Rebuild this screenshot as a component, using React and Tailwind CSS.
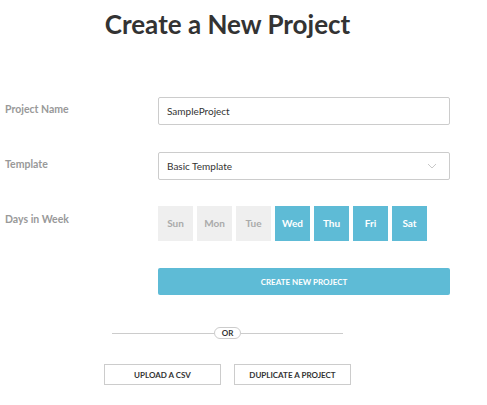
import React from "react";

const days = [
  { d: "Sun", on: false },
  { d: "Mon", on: false },
  { d: "Tue", on: false },
  { d: "Wed", on: true },
  { d: "Thu", on: true },
  { d: "Fri", on: true },
  { d: "Sat", on: true },
];

export default function App() {
  return (
    <div className="w-[487px] h-[405px] bg-white font-['Lato',sans-serif]">
      <div className="w-[450px] pl-[5px]">
        <h1 className="pt-[8px] h-[50px] text-center text-[26px] font-bold text-[#333333] leading-[32px]">
          Create a New Project
        </h1>
        <div className="mt-[47px] flex items-center h-[28px]">
          <div className="w-[153px] text-[10.5px] font-bold text-[#999999] -mt-[2px]">Project Name</div>
          <div className="flex-1 h-[28px] border border-[#cccccc] rounded-[2px] flex items-center px-[8px] text-[10px] text-[#333333]">
            SampleProject
          </div>
        </div>
        <div className="mt-[27px] flex items-center h-[28px]">
          <div className="w-[153px] text-[10.5px] font-bold text-[#999999] -mt-[2px]">Template</div>
          <div className="flex-1 h-[28px] border border-[#cccccc] rounded-[2px] flex items-center justify-between pl-[8px] pr-[12px] text-[10px] text-[#333333]">
            <span>Basic Template</span>
            <svg width="10" height="6" viewBox="0 0 10 6" fill="none">
              <path d="M1 1l4 4 4-4" stroke="#c8c8c8" strokeWidth="1" />
            </svg>
          </div>
        </div>
        <div className="mt-[26px] flex items-start">
          <div className="w-[153px] text-[10.5px] font-bold text-[#999999] pt-[6px]">Days in Week</div>
          <div className="flex gap-[4px]">
            {days.map((x) => (
              <div
                key={x.d}
                className={
                  x.on
                    ? "w-[35px] h-[35px] flex items-center justify-center bg-[#5ebbd6] text-white text-[10px] font-bold"
                    : "w-[35px] h-[35px] flex items-center justify-center bg-[#efefef] text-[#aaaaaa] text-[10px] font-bold"
                }
              >
                {x.d}
              </div>
            ))}
          </div>
        </div>
        <div className="mt-[27px] flex">
          <div className="w-[153px]" />
          <div className="flex-1 h-[27px] bg-[#5ebbd6] rounded-[2px] flex items-center justify-center text-white text-[8px] font-bold">
            CREATE NEW PROJECT
          </div>
        </div>
        <div className="mt-[32px] flex items-center justify-center">
          <div className="w-[102px] h-px bg-[#cccccc]" />
          <div className="w-[27px] h-[12px] rounded-full border border-[#cccccc] flex items-center justify-center text-[8px] font-bold text-[#333333]">
            OR
          </div>
          <div className="w-[102px] h-px bg-[#cccccc]" />
        </div>
        <div className="mt-[25px] flex justify-center gap-[13px]">
          <div className="w-[117px] h-[21px] border border-[#cccccc] flex items-center justify-center text-[8px] font-bold text-[#333333]">
            UPLOAD A CSV
          </div>
          <div className="w-[117px] h-[21px] border border-[#cccccc] flex items-center justify-center text-[8px] font-bold text-[#333333]">
            DUPLICATE A PROJECT
          </div>
        </div>
      </div>
    </div>
  );
}
